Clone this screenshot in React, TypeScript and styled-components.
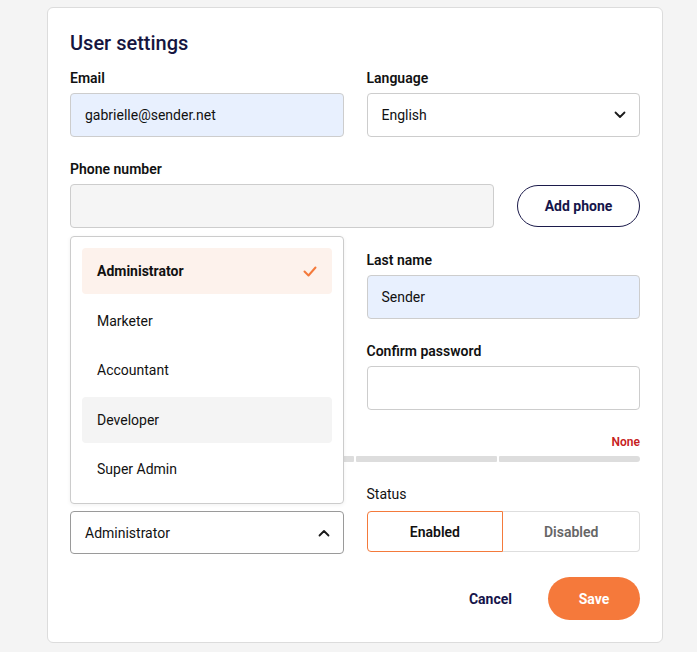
import React from 'react';
import styled, { createGlobalStyle } from 'styled-components';

const GlobalStyle = createGlobalStyle`
  body {
    margin: 0;
    background: #f4f4f4;
    font-family: Roboto, "Liberation Sans", Arial, sans-serif;
    color: #111;
  }
`;

const Page = styled.div`
  padding: 7px 34px 11px 47px;
`;

const Card = styled.div`
  background: #fff;
  border: 1px solid #dcdcdc;
  border-radius: 6px;
  padding: 21px 22px 22px 22px;
`;

const Title = styled.h1`
  margin: 0 0 11px 0;
  font-size: 20px;
  line-height: 28px;
  font-weight: 500;
  color: #16153f;
`;

const Grid = styled.div`
  display: grid;
  grid-template-columns: 1fr 1fr;
  column-gap: 23px;
  row-gap: 22px;
`;

const Field = styled.div<{ $wide?: boolean }>`
  display: flex;
  flex-direction: column;
  position: relative;
  grid-column: ${(p) => (p.$wide ? '1 / -1' : 'auto')};
`;

const Label = styled.label<{ $light?: boolean }>`
  font-size: 14px;
  line-height: 20px;
  font-weight: ${(p) => (p.$light ? 400 : 600)};
  color: #111;
  margin-bottom: ${(p) => (p.$light ? '7px' : '5px')};
`;

const Input = styled.div<{ $fill?: 'auto' | 'off' | 'none'; $grow?: boolean }>`
  height: 44px;
  box-sizing: border-box;
  border: 1px solid #cdcdcd;
  border-radius: 4px;
  background: ${(p) =>
    p.$fill === 'auto' ? '#e8f0fe' : p.$fill === 'off' ? '#f5f5f5' : '#fff'};
  display: flex;
  align-items: center;
  padding: 0 14px;
  font-size: 14px;
  color: #111;
  flex: ${(p) => (p.$grow ? '1' : 'none')};
`;

const Select = styled(Input)<{ $open?: boolean }>`
  justify-content: space-between;
  border-color: ${(p) => (p.$open ? '#9a9a9a' : '#cdcdcd')};
  height: ${(p) => (p.$open ? '43px' : '44px')};
  padding-right: 13px;
`;

const PhoneRow = styled.div`
  display: flex;
  gap: 23px;
  align-items: center;
`;

const OutlineButton = styled.button`
  height: 42px;
  width: 123px;
  border: 1.5px solid #1c1b4b;
  border-radius: 21px;
  background: #fff;
  font-family: inherit;
  font-size: 14px;
  font-weight: 700;
  color: #15144a;
`;

const Strength = styled.div`
  grid-column: 1 / -1;
  display: flex;
  flex-direction: column;
  margin-top: 2px;
`;

const StrengthText = styled.div`
  text-align: right;
  font-size: 12px;
  line-height: 16px;
  font-weight: 600;
  color: #c62121;
  margin-bottom: 6px;
`;

const Bars = styled.div`
  display: grid;
  grid-template-columns: repeat(4, 1fr);
  gap: 2px;
`;

const Bar = styled.div`
  height: 6px;
  background: #dddddd;
  border-radius: 1px;
  &:last-child {
    border-radius: 1px 3px 3px 1px;
  }
`;

const Segmented = styled.div`
  display: grid;
  grid-template-columns: 1fr 1fr;
  height: 41px;
`;

const Segment = styled.div<{ $active?: boolean }>`
  display: flex;
  align-items: center;
  justify-content: center;
  font-size: 14px;
  font-weight: 600;
  color: ${(p) => (p.$active ? '#111' : '#666')};
  border: 1px solid ${(p) => (p.$active ? '#f47a3b' : '#dedede')};
  border-left-width: ${(p) => (p.$active ? '1px' : '0')};
  border-radius: ${(p) => (p.$active ? '4px 0 0 4px' : '0 4px 4px 0')};
`;

const Menu = styled.div`
  position: absolute;
  left: 0;
  right: 0;
  bottom: calc(100% - 20px);
  background: #fff;
  border: 1px solid #cccccc;
  border-radius: 4px;
  box-shadow: 0 1px 4px rgba(0, 0, 0, 0.06);
  padding: 11px 11px 11px 11px;
  display: flex;
  flex-direction: column;
  gap: 3.5px;
  z-index: 2;
`;

const Option = styled.div<{ $selected?: boolean; $hover?: boolean }>`
  height: 46px;
  flex: none;
  border-radius: 4px;
  display: flex;
  align-items: center;
  justify-content: space-between;
  padding: 0 15px;
  font-size: 14px;
  font-weight: ${(p) => (p.$selected ? 700 : 400)};
  color: #111;
  background: ${(p) => (p.$selected ? '#fdf2ec' : p.$hover ? '#f4f4f4' : 'transparent')};
`;

const Actions = styled.div`
  display: flex;
  justify-content: flex-end;
  align-items: center;
  gap: 36px;
  margin-top: 23px;
`;

const TextButton = styled.button`
  border: none;
  background: none;
  font-family: inherit;
  font-size: 14px;
  font-weight: 700;
  color: #15144a;
  padding: 0;
`;

const PrimaryButton = styled.button`
  width: 92px;
  height: 43px;
  border: none;
  border-radius: 22px;
  background: #f5793b;
  color: #fff;
  font-family: inherit;
  font-size: 14px;
  font-weight: 700;
`;

const Chevron = ({ up }: { up?: boolean }) => (
  <svg width="12" height="8" viewBox="0 0 12 8" fill="none">
    <path
      d={up ? 'M1.5 6.5L6 2l4.5 4.5' : 'M1.5 1.5L6 6l4.5-4.5'}
      stroke="#1a1a1a"
      strokeWidth="1.8"
      strokeLinecap="round"
      strokeLinejoin="round"
    />
  </svg>
);

const Check = () => (
  <svg width="14" height="11" viewBox="0 0 14 11" fill="none">
    <path d="M1.5 5.5l4 4 7-8" stroke="#f47a3b" strokeWidth="2" strokeLinecap="round" strokeLinejoin="round" />
  </svg>
);

const roles = ['Administrator', 'Marketer', 'Accountant', 'Developer', 'Super Admin'];

export default function App() {
  return (
    <Page>
      <GlobalStyle />
      <Card>
        <Title>User settings</Title>
        <Grid>
          <Field>
            <Label>Email</Label>
            <Input $fill="auto">gabrielle@sender.net</Input>
          </Field>
          <Field>
            <Label>Language</Label>
            <Select>
              English
              <Chevron />
            </Select>
          </Field>

          <Field $wide>
            <Label>Phone number</Label>
            <PhoneRow>
              <Input $fill="off" $grow />
              <OutlineButton>Add phone</OutlineButton>
            </PhoneRow>
          </Field>

          <Field>
            <Label>First name</Label>
            <Input $fill="auto">Gabrielle</Input>
          </Field>
          <Field>
            <Label>Last name</Label>
            <Input $fill="auto">Sender</Input>
          </Field>

          <Field>
            <Label>Password</Label>
            <Input />
          </Field>
          <Field>
            <Label>Confirm password</Label>
            <Input />
          </Field>

          <Strength>
            <StrengthText>None</StrengthText>
            <Bars>
              <Bar />
              <Bar />
              <Bar />
              <Bar />
            </Bars>
          </Strength>

          <Field>
            <Label $light>Role</Label>
            <Select $open>
              Administrator
              <Chevron up />
            </Select>
            <Menu>
              {roles.map((r, i) => (
                <Option key={r} $selected={i === 0} $hover={r === 'Developer'}>
                  {r}
                  {i === 0 && <Check />}
                </Option>
              ))}
            </Menu>
          </Field>
          <Field>
            <Label $light>Status</Label>
            <Segmented>
              <Segment $active>Enabled</Segment>
              <Segment>Disabled</Segment>
            </Segmented>
          </Field>
        </Grid>
        <Actions>
          <TextButton>Cancel</TextButton>
          <PrimaryButton>Save</PrimaryButton>
        </Actions>
      </Card>
    </Page>
  );
}
